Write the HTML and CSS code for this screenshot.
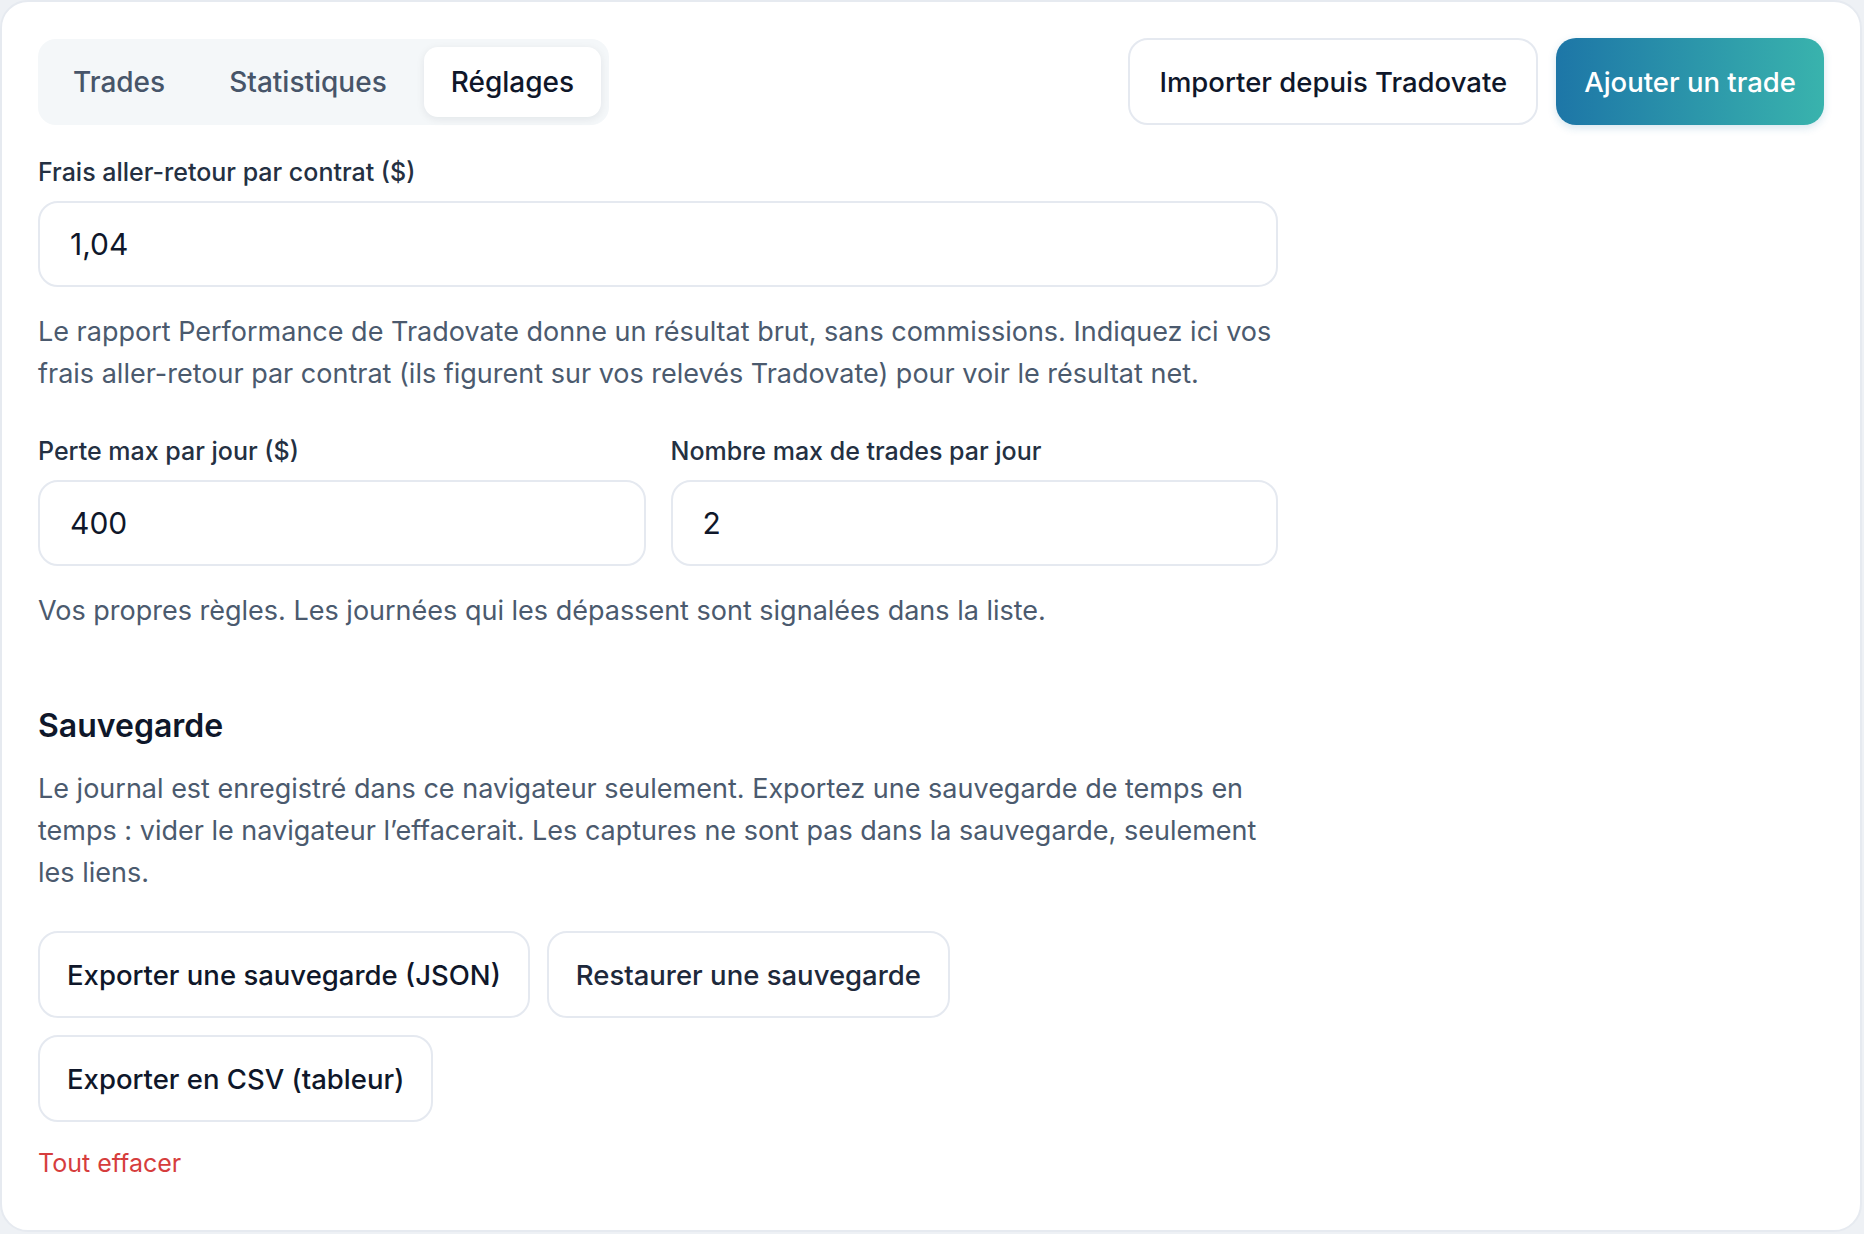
FILE: index.html
```html
<!DOCTYPE html>
<html lang="fr">
<head>
  <meta charset="UTF-8" />
  <meta name="viewport" content="width=device-width, initial-scale=1.0"/>
  <title>Journal de trading — Réglages</title>
  <link rel="stylesheet" href="styles.css">
</head>
<body>
  <div class="card">

    <!-- En-tête : onglets + actions -->
    <header class="topbar">
      <nav class="tabs">
        <button class="tab">Trades</button>
        <button class="tab">Statistiques</button>
        <button class="tab active">Réglages</button>
      </nav>
      <div class="actions">
        <button class="btn">Importer depuis Tradovate</button>
        <button class="btn primary">Ajouter un trade</button>
      </div>
    </header>

    <!-- Réglages -->
    <section class="settings">
      <div class="field">
        <label for="fees">Frais aller-retour par contrat ($)</label>
        <input type="text" id="fees" value="1,04" />
      </div>
      <p class="hint">Le rapport Performance de Tradovate donne un résultat brut, sans commissions. Indiquez ici vos frais aller-retour par contrat (ils figurent sur vos relevés Tradovate) pour voir le résultat net.</p>

      <div class="row">
        <div class="field">
          <label for="max-loss">Perte max par jour ($)</label>
          <input type="text" id="max-loss" value="400" />
        </div>
        <div class="field">
          <label for="max-trades">Nombre max de trades par jour</label>
          <input type="text" id="max-trades" value="2" />
        </div>
      </div>
      <p class="hint">Vos propres règles. Les journées qui les dépassent sont signalées dans la liste.</p>

      <h2>Sauvegarde</h2>
      <p class="hint">Le journal est enregistré dans ce navigateur seulement. Exportez une sauvegarde de temps en temps : vider le navigateur l’effacerait. Les captures ne sont pas dans la sauvegarde, seulement les liens.</p>

      <div class="backup">
        <button class="btn">Exporter une sauvegarde (JSON)</button>
        <label class="btn restore">Restaurer une sauvegarde
          <input type="file" accept=".json" />
        </label>
      </div>
      <div class="backup">
        <button class="btn">Exporter en CSV (tableur)</button>
      </div>
      <button class="danger">Tout effacer</button>
    </section>

  </div>
</body>
</html>
```

FILE: styles.css
```css
* {
  box-sizing: border-box;
}

body {
  margin: 0;
  background: #eef1f5;
  font-family: Inter, 'Noto Sans', sans-serif;
  color: #0f172a;
}

.card {
  min-height: 1232px;
  margin: 0 2px 2px 0;
  padding: 36px;
  background: #fff;
  border: 2px solid #e6eaf0;
  border-radius: 28px;
}

button {
  font-family: inherit;
  cursor: pointer;
}

.topbar {
  display: flex;
  justify-content: space-between;
  align-items: center;
}

.tabs {
  display: flex;
  gap: 10px;
  padding: 8px;
  background: #f4f7f9;
  border-radius: 18px;
}

.tab {
  height: 70px;
  padding: 0 27px;
  border: none;
  border-radius: 14px;
  background: transparent;
  font-size: 28px;
  font-weight: 500;
  color: #475569;
}

.tab.active {
  background: #fff;
  color: #0f172a;
  box-shadow: 0 2px 8px rgba(15, 23, 42, 0.08);
}

.actions {
  display: flex;
  gap: 18px;
}

.btn {
  display: inline-flex;
  align-items: center;
  height: 87px;
  padding: 0 29px;
  background: #fff;
  border: 2px solid #e5e9f0;
  border-radius: 20px;
  font-size: 27.5px;
  font-weight: 500;
  color: #0f172a;
}

.btn.primary {
  padding: 0 28px;
  border: none;
  color: #fff;
  background: linear-gradient(90deg, #1d76a7, #39b3ad);
  box-shadow: 0 3px 8px rgba(29, 118, 167, 0.18);
}

.settings {
  max-width: 1240px;
  margin-top: 32px;
}

.field {
  display: flex;
  flex-direction: column;
  gap: 14px;
}

.field label {
  font-size: 25px;
  font-weight: 500;
  line-height: 30px;
  color: #243042;
}

.field input {
  height: 86px;
  padding: 0 30px;
  border: 2px solid #e5e9f0;
  border-radius: 20px;
  font-family: inherit;
  font-size: 30px;
  color: #0f172a;
  outline: none;
}

.hint {
  margin: 24px 0 0;
  font-size: 27px;
  line-height: 42px;
  color: #4b5a6e;
}

.row {
  display: grid;
  grid-template-columns: 1fr 1fr;
  gap: 25px;
  margin-top: 41px;
}

h2 {
  margin: 76px 0 0;
  font-size: 32px;
  font-weight: 600;
  line-height: 36px;
  color: #0f172a;
}

.backup {
  display: flex;
  gap: 17px;
  margin-top: 17px;
}

.hint + .backup {
  margin-top: 37px;
}

.backup .btn {
  padding: 0 27px;
}

.restore {
  color: #1e293b;
  cursor: pointer;
}

.restore input {
  display: none;
}

.danger {
  margin-top: 25px;
  padding: 0;
  border: none;
  background: none;
  font-size: 25px;
  line-height: 32px;
  color: #d63d3d;
}
```
